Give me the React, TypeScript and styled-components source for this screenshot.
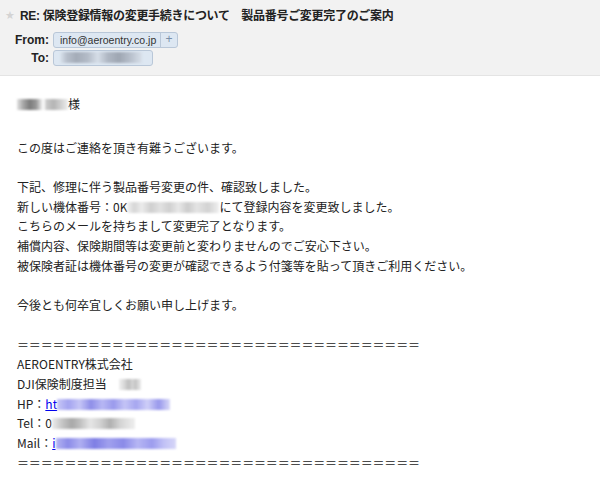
import React from "react";
import styled, { createGlobalStyle } from "styled-components";

const GlobalStyle = createGlobalStyle`
  html, body {
    margin: 0;
    padding: 0;
    background: #ffffff;
  }
  body {
    font-family: "Noto Sans CJK JP", "Liberation Sans", sans-serif;
  }
`;

const Page = styled.div`
  width: 600px;
  height: 480px;
  overflow: hidden;
  background: #ffffff;
`;

const Header = styled.header`
  height: 76px;
  box-sizing: border-box;
  padding: 7px 0 0 5px;
  background: #f2f2f2;
  border-bottom: 1px solid #e4e4e4;
`;

const TitleRow = styled.div`
  display: flex;
  align-items: center;
  height: 18px;
  margin-bottom: 7px;
`;

const Star = styled.span`
  width: 10px;
  margin-right: 5px;
  color: #d4d4d4;
  font-family: "DejaVu Sans", sans-serif;
  font-size: 11px;
  line-height: 18px;
`;

const Subject = styled.h1`
  margin: 0;
  font-family: "Liberation Sans", "Noto Sans CJK JP", sans-serif;
  font-size: 12px;
  font-weight: bold;
  letter-spacing: -0.3px;
  color: #222222;
  line-height: 18px;
  white-space: pre;
`;

const FieldRow = styled.div`
  display: flex;
  align-items: center;
  height: 16px;
  margin-bottom: 2px;
`;

const FieldLabel = styled.span`
  width: 44px;
  margin-right: 4px;
  text-align: right;
  font-family: "Liberation Sans", sans-serif;
  font-size: 12px;
  font-weight: bold;
  color: #222222;
`;

const Pill = styled.span<{ $w: number }>`
  display: inline-flex;
  align-items: center;
  width: ${(p) => p.$w}px;
  height: 16px;
  box-sizing: border-box;
  border: 1px solid #b9c7d8;
  border-radius: 3px;
  background: #dde7f2;
  overflow: hidden;
`;

const PillText = styled.span`
  flex: 1;
  padding-left: 6px;
  font-family: "Liberation Sans", sans-serif;
  font-size: 10.5px;
  color: #333333;
  line-height: 14px;
  white-space: nowrap;
`;

const PillPlus = styled.span`
  width: 16px;
  height: 100%;
  border-left: 1px solid #b9c7d8;
  text-align: center;
  font-family: "Liberation Sans", sans-serif;
  font-size: 12px;
  line-height: 13px;
  color: #7a8ea8;
`;

const Body = styled.main`
  padding: 18px 0 0 17px;
  font-size: 12px;
  line-height: 19.7px;
  color: #222222;
`;

const Greeting = styled.div`
  margin-bottom: 24px;
`;

const Line = styled.div`
  white-space: pre;
  height: 19.7px;
`;

const Rule = styled(Line)`
  letter-spacing: -0.15px;
`;

const Blur = styled.span<{ $w: number; $bg: string }>`
  display: inline-block;
  width: ${(p) => p.$w}px;
  height: 11px;
  vertical-align: -1px;
  background: ${(p) => p.$bg};
  filter: blur(1px);
`;

const Link = styled.a`
  color: #0000ee;
  text-decoration: underline;
`;

const grayA =
  "linear-gradient(90deg, #e2e2e2 0%, #a8a8a8 12%, #7c7c7c 25%, #9a9a9a 38%, #d8d8d8 46%, #ffffff 52%, #c8c8c8 58%, #b4b4b4 72%, #d0d0d0 86%, #eeeeee 100%)";
const grayB =
  "linear-gradient(90deg, #f2f2f2 0%, #d6d6d6 8%, #ececec 16%, #cfcfcf 26%, #e2e2e2 36%, #d0d0d0 46%, #e8e8e8 56%, #cccccc 66%, #e4e4e4 76%, #d2d2d2 88%, #f0f0f0 100%)";
const grayC =
  "linear-gradient(90deg, #f0f0f0 0%, #dcdcdc 20%, #bdbdbd 45%, #d6d6d6 60%, #c4c4c4 75%, #ececec 100%)";
const grayD =
  "linear-gradient(90deg, #ececec 0%, #c6c6c6 12%, #a8a8a8 24%, #c0c0c0 34%, #e6e6e6 46%, #d2d2d2 58%, #b0b0b0 70%, #d4d4d4 82%, #efefef 100%)";
const blueA =
  "linear-gradient(90deg, #c8c8f6 0%, #a4a4f0 10%, #c6c6f6 20%, #8e8ee8 30%, #b8b8f4 40%, #9a9aec 50%, #c4c4f6 60%, #a6a6f0 70%, #cfcff8 80%, #9898ec 90%, #dadaf8 100%)";
const blueB =
  "linear-gradient(90deg, #b4b4f2 0%, #8c8ce8 10%, #b0b0f2 20%, #7e7ee4 32%, #a0a0ee 44%, #8a8ae8 56%, #b6b6f4 68%, #9c9cee 80%, #c2c2f6 90%, #d6d6f8 100%)";

const toBlur =
  "linear-gradient(90deg, #dbe4ee 0%, #b8c0cc 8%, #a4acb8 20%, #b4bcc8 34%, #d6dee8 46%, #b0b8c4 58%, #9ea6b2 72%, #b8c0cc 86%, #d8e0ea 100%)";

const equals = "＝".repeat(34);

export default function App() {
  return (
    <Page>
      <GlobalStyle />
      <Header>
        <TitleRow>
          <Star>★</Star>
          <Subject>RE: 保険登録情報の変更手続きについて　製品番号ご変更完了のご案内</Subject>
        </TitleRow>
        <FieldRow>
          <FieldLabel>From:</FieldLabel>
          <Pill $w={125}>
            <PillText>info@aeroentry.co.jp</PillText>
            <PillPlus>+</PillPlus>
          </Pill>
        </FieldRow>
        <FieldRow>
          <FieldLabel>To:</FieldLabel>
          <Pill $w={100}>
            <PillText>
              <Blur $w={82} $bg={toBlur} />
            </PillText>
          </Pill>
        </FieldRow>
      </Header>
      <Body>
        <Greeting>
          <Blur $w={51} $bg={grayA} />様
        </Greeting>
        <Line>この度はご連絡を頂き有難うございます。</Line>
        <Line />
        <Line>下記、修理に伴う製品番号変更の件、確認致しました。</Line>
        <Line>
          新しい機体番号：0K
          <Blur $w={92} $bg={grayB} />
          にて登録内容を変更致しました。
        </Line>
        <Line>こちらのメールを持ちまして変更完了となります。</Line>
        <Line>補償内容、保険期間等は変更前と変わりませんのでご安心下さい。</Line>
        <Line>被保険者証は機体番号の変更が確認できるよう付箋等を貼って頂きご利用ください。</Line>
        <Line />
        <Line>今後とも何卒宜しくお願い申し上げます。</Line>
        <Line />
        <Rule>{equals}</Rule>
        <Line>AEROENTRY株式会社</Line>
        <Line>
          DJI保険制度担当　<Blur $w={22} $bg={grayC} />
        </Line>
        <Line>
          HP：<Link href="#">ht</Link>
          <Blur $w={113} $bg={blueA} />
        </Line>
        <Line>
          Tel：0<Blur $w={83} $bg={grayD} />
        </Line>
        <Line>
          Mail：<Link href="#">i</Link>
          <Blur $w={120} $bg={blueB} />
        </Line>
        <Rule>{equals}</Rule>
      </Body>
    </Page>
  );
}
